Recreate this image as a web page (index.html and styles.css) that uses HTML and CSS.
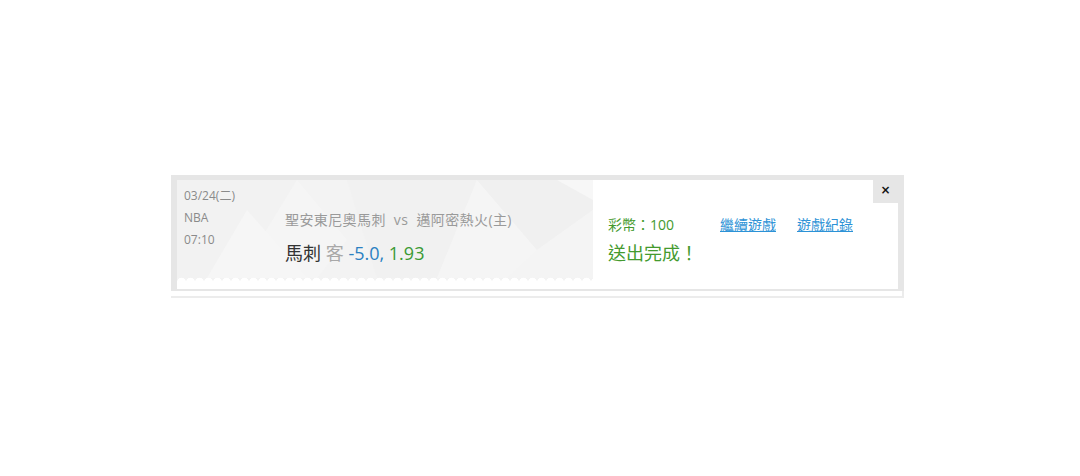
FILE: index.html
```html
<!DOCTYPE html>
<html lang="zh-Hant">
<head>
<meta charset="utf-8">
<title>投注完成</title>
<link rel="stylesheet" href="styles.css">
</head>
<body>
<div class="page">
  <div class="frame">
    <div class="inner">
      <div class="match">
        <svg class="facets" width="416" height="98" viewBox="0 0 416 98" aria-hidden="true">
          <polygon points="0,0 120,0 60,98 0,98" fill="#f2f2f2"/>
          <polygon points="60,98 120,0 170,60 140,98" fill="#f5f5f5"/>
          <polygon points="30,98 70,30 130,98" fill="#f6f6f6"/>
          <polygon points="170,0 300,0 260,98 200,98" fill="#f1f1f1"/>
          <polygon points="260,98 300,0 360,70 330,98" fill="#f5f5f5"/>
          <polygon points="300,0 416,0 416,30 360,70" fill="#f0f0f0"/>
          <polygon points="360,70 416,30 416,98 330,98" fill="#f4f4f4"/>
          <polygon points="380,0 416,0 416,20" fill="#f7f7f7"/>
        </svg>
        <div class="meta">
          <div>03/24(二)</div>
          <div>NBA</div>
          <div>07:10</div>
        </div>
        <div class="bet">
          <div class="teams">聖安東尼奧馬刺&nbsp;&nbsp;vs&nbsp;&nbsp;邁阿密熱火(主)</div>
          <div class="pick"><span class="team">馬刺</span> <span class="side">客</span> <span class="line">-5.0,</span> <span class="odds">1.93</span></div>
        </div>
      </div>
      <div class="result">
        <div class="row">
          <span class="coins">彩幣：100</span>
          <a class="link" href="#">繼續遊戲</a>
          <a class="link" href="#">遊戲紀錄</a>
        </div>
        <div class="done">送出完成！</div>
      </div>
      <button class="close" type="button" aria-label="關閉">×</button>
    </div>
  </div>
  <div class="below"></div>
</div>
</body>
</html>
```

FILE: styles.css
```css
html, body {
  margin: 0;
  padding: 0;
  background: #ffffff;
}
body {
  font-family: "Open Sans", "Noto Sans CJK TC", sans-serif;
}
.page {
  padding-top: 175px;
  margin-left: 171px;
  width: 733px;
}
.frame {
  background: #e6e6e6;
  padding: 5px 6px 2px 6px;
}
.inner {
  position: relative;
  display: flex;
  height: 109px;
  background: #ffffff;
}
.match {
  position: relative;
  width: 416px;
  height: 101px;
  display: flex;
  background: #f3f3f3;
}
.match::after {
  content: "";
  position: absolute;
  left: 0;
  right: 0;
  top: 95px;
  height: 14px;
  background:
    radial-gradient(circle at 4.5px 7px, #ffffff 4px, transparent 4.6px) 0 0 / 9px 6px repeat-x,
    linear-gradient(#ffffff, #ffffff) 0 6px / 100% 8px no-repeat;
}
.facets {
  position: absolute;
  left: 0;
  top: 0;
}
.meta {
  position: relative;
  width: 101px;
  padding: 5px 0 0 7px;
  font-size: 12px;
  line-height: 22px;
  color: #8a8a8a;
}
.bet {
  position: relative;
  padding-top: 30px;
}
.teams {
  font-size: 14px;
  line-height: 20px;
  letter-spacing: 0.4px;
  color: #9a9a9a;
}
.pick {
  margin-top: 11px;
  font-size: 18px;
  line-height: 24px;
  white-space: nowrap;
}
.team { color: #333333; }
.side { color: #a8a8a8; }
.line { color: #2b80c2; }
.odds { color: #3a9a34; }
.result {
  padding: 35px 0 0 15px;
}
.row {
  display: flex;
  align-items: center;
  font-size: 14px;
  line-height: 20px;
}
.coins {
  width: 112px;
  color: #449a2e;
}
.link {
  color: #2c92d6;
  text-decoration: underline;
  margin-right: 21px;
}
.done {
  margin-top: 6px;
  font-size: 18px;
  line-height: 24px;
  color: #449a2e;
}
.close {
  position: absolute;
  top: 0;
  right: 0;
  width: 25px;
  height: 23px;
  border: 0;
  padding: 0 0 4px 0;
  background: #e6e6e6;
  color: #111111;
  font-family: "DejaVu Sans", sans-serif;
  font-size: 12px;
  font-weight: bold;
  line-height: 18px;
  cursor: pointer;
}
.below {
  height: 5px;
  border-bottom: 2px solid #ececec;
  border-right: 2px solid #ececec;
}
```
